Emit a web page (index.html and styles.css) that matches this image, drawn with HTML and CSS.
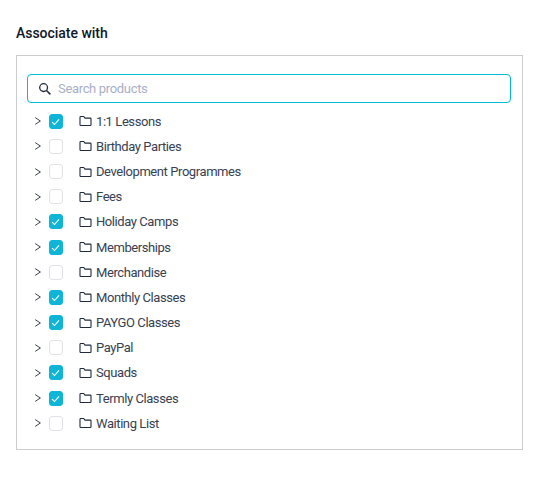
FILE: index.html
```html
<!DOCTYPE html>
<html lang="en">
<head>
<meta charset="utf-8">
<title>Associate with</title>
<link rel="stylesheet" href="styles.css">
</head>
<body>
<svg class="defs" width="0" height="0" aria-hidden="true">
  <symbol id="folder" viewBox="0 0 13 12"><path d="M1 2.2c0-.4.3-.7.7-.7h3l1.3 1.6h5.3c.4 0 .7.3.7.7v6c0 .4-.3.7-.7.7H1.7c-.4 0-.7-.3-.7-.7z" fill="none" stroke="#1f2a3a" stroke-width="1.1"/></symbol>
  <symbol id="chev" viewBox="0 0 8 10"><path d="M1.2 1.6 6.4 5 1.2 8.4" fill="none" stroke="#3a4352" stroke-width="1"/></symbol>
  <symbol id="tick" viewBox="0 0 14 14"><path d="M3.4 7.2 5.9 9.7l4.9-5.4" fill="none" stroke="#fff" stroke-width="1.2"/></symbol>
</svg>
<main class="field">
  <h2 class="label">Associate with</h2>
  <section class="box">
    <div class="search">
      <svg class="search-icon" viewBox="0 0 14 14"><circle cx="5.6" cy="5.6" r="3.9" fill="none" stroke="#1f2a3a" stroke-width="1.3"/><path d="M8.5 8.5 12.4 12.4" stroke="#1f2a3a" stroke-width="1.5"/></svg>
      <span class="placeholder">Search products</span>
    </div>
    <ul class="tree">
      <li class="row"><svg class="chev"><use href="#chev"/></svg><span class="check on"><svg class="tick"><use href="#tick"/></svg></span><svg class="folder"><use href="#folder"/></svg><span class="name">1:1 Lessons</span></li>
      <li class="row"><svg class="chev"><use href="#chev"/></svg><span class="check"></span><svg class="folder"><use href="#folder"/></svg><span class="name">Birthday Parties</span></li>
      <li class="row"><svg class="chev"><use href="#chev"/></svg><span class="check"></span><svg class="folder"><use href="#folder"/></svg><span class="name">Development Programmes</span></li>
      <li class="row"><svg class="chev"><use href="#chev"/></svg><span class="check"></span><svg class="folder"><use href="#folder"/></svg><span class="name">Fees</span></li>
      <li class="row"><svg class="chev"><use href="#chev"/></svg><span class="check on"><svg class="tick"><use href="#tick"/></svg></span><svg class="folder"><use href="#folder"/></svg><span class="name">Holiday Camps</span></li>
      <li class="row"><svg class="chev"><use href="#chev"/></svg><span class="check on"><svg class="tick"><use href="#tick"/></svg></span><svg class="folder"><use href="#folder"/></svg><span class="name">Memberships</span></li>
      <li class="row"><svg class="chev"><use href="#chev"/></svg><span class="check"></span><svg class="folder"><use href="#folder"/></svg><span class="name">Merchandise</span></li>
      <li class="row"><svg class="chev"><use href="#chev"/></svg><span class="check on"><svg class="tick"><use href="#tick"/></svg></span><svg class="folder"><use href="#folder"/></svg><span class="name">Monthly Classes</span></li>
      <li class="row"><svg class="chev"><use href="#chev"/></svg><span class="check on"><svg class="tick"><use href="#tick"/></svg></span><svg class="folder"><use href="#folder"/></svg><span class="name">PAYGO Classes</span></li>
      <li class="row"><svg class="chev"><use href="#chev"/></svg><span class="check"></span><svg class="folder"><use href="#folder"/></svg><span class="name">PayPal</span></li>
      <li class="row"><svg class="chev"><use href="#chev"/></svg><span class="check on"><svg class="tick"><use href="#tick"/></svg></span><svg class="folder"><use href="#folder"/></svg><span class="name">Squads</span></li>
      <li class="row"><svg class="chev"><use href="#chev"/></svg><span class="check on"><svg class="tick"><use href="#tick"/></svg></span><svg class="folder"><use href="#folder"/></svg><span class="name">Termly Classes</span></li>
      <li class="row"><svg class="chev"><use href="#chev"/></svg><span class="check"></span><svg class="folder"><use href="#folder"/></svg><span class="name">Waiting List</span></li>
    </ul>
  </section>
</main>
</body>
</html>
```
FILE: styles.css
```css
* { box-sizing: border-box; }
html, body { margin: 0; background: #fff; }
body { font-family: Roboto, "Liberation Sans", sans-serif; color: #1f2a3a; }
.defs { position: absolute; }
.field { width: 523px; margin-left: 16px; padding-top: 24px; }
.label { margin: 0 0 13px; font-size: 14px; line-height: 18px; font-weight: 500; color: #101828; letter-spacing: -0.03px; }
.box { width: 507px; height: 395px; border: 1px solid #ccc; padding: 18px 11px 0 10px; }
.search { display: flex; align-items: center; height: 29px; border: 1.5px solid #00bcd9; border-radius: 4px; padding-left: 10px; }
.search-icon { width: 14px; height: 14px; flex: none; }
.placeholder { margin-left: 6px; font-size: 13px; letter-spacing: -0.33px; color: #a9afc6; }
.tree { list-style: none; margin: 5.74px 0 0; padding: 0; }
.row { display: flex; align-items: center; height: 25.17px; }
.chev { width: 8px; height: 10px; flex: none; margin-left: 7px; }
.check { display: flex; width: 14px; height: 15px; flex: none; margin-left: 7px; border: 1px solid #e0e2e6; border-radius: 3px; background: #fff; }
.check.on { background: #0fb5d6; border-color: #0fb5d6; }
.tick { width: 14px; height: 14px; margin: 0 0 0 -1px; }
.folder { width: 13px; height: 12px; flex: none; margin-left: 16px; }
.name { margin-left: 4px; font-size: 13px; letter-spacing: -0.42px; color: #374151; }
```
